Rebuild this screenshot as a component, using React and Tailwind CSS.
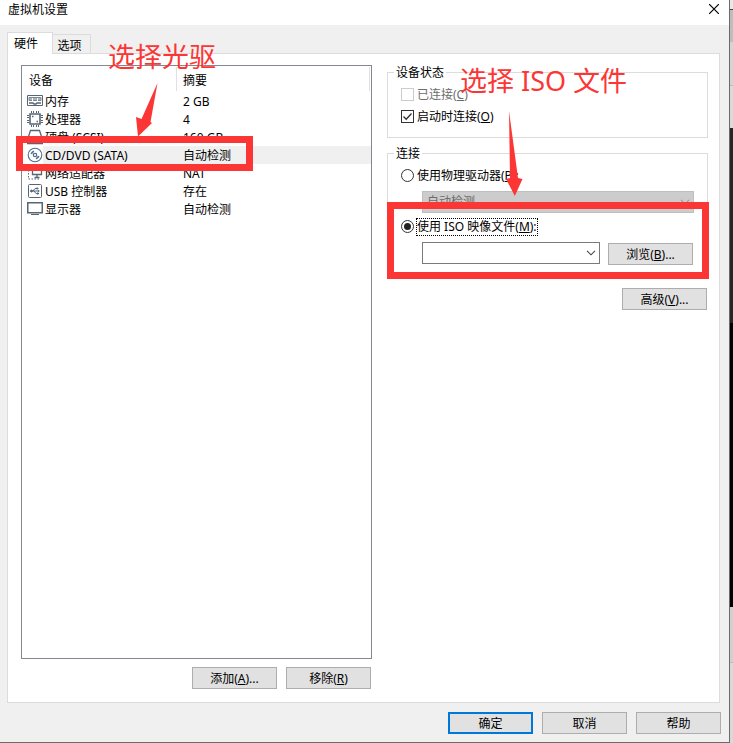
import React, { useState } from 'react';
import { clsx } from 'clsx';

const iconProps = {
  width: 16,
  height: 16,
  viewBox: '0 0 16 16',
  fill: 'none',
  stroke: '#566675',
  className: 'shrink-0',
  'aria-hidden': true,
};

const MemoryIcon = () => (
  <svg {...iconProps}>
    <path d="M.5 2.5h15v10H.5z" />
    <path d="M2 4.500h12v3H2z" fill="#a9b2ba" stroke="#7c8995" />
    <path d="M5.500 5v3M10.500 5v3" stroke="#fff" />
    <path d="M2 10h4l1 1h2l1-1h4" strokeWidth="1.500" />
  </svg>
);

const CpuIcon = () => (
  <svg {...iconProps}>
    <path d="M3 3h10v10H3z" strokeWidth="1.6" />
    <path d="M4.5 0v2M6.5 0v2M9.5 0v2M11.5 0v2M4.5 14v2M6.5 14v2M9.5 14v2M11.5 14v2M0 4.5h2M0 6.5h2M0 9.5h2M0 11.5h2M14 4.5h2M14 6.5h2M14 9.5h2M14 11.5h2" />
    <path d="M5 5.500h1.500M9.500 10.500H11" strokeWidth="1.4" />
  </svg>
);

const DiskIcon = () => (
  <svg {...iconProps}>
    <path d="M3.5 1.5h9l3 9v4H.5v-4zM.5 10.5h15M12 12.5h2" strokeWidth="1.3" />
  </svg>
);

const DiscIcon = () => (
  <svg {...iconProps} stroke="#4f6f8c">
    <circle cx="8" cy="8" r="6.8" strokeWidth="1.1" />
    <circle cx="8" cy="8" r="1.700" strokeWidth="1.2" />
    <path d="M4.300 7A4 4 0 0 1 7 4.300M11.700 9A4 4 0 0 1 9 11.700" strokeWidth="1.7" />
  </svg>
);

const NetworkIcon = () => (
  <svg {...iconProps}>
    <path d="M5.5 3.5h9v6h-9zM10 10v2M7.5 12.5h5" strokeWidth="1.3" />
    <path d="M1.5 5v9h11" strokeDasharray="1.5 1.5" />
  </svg>
);

const UsbIcon = () => (
  <svg {...iconProps}>
    <rect x="1.500" y="1.500" width="13" height="13" rx="1" />
    <path d="M4 8h8M6 8l2-2.500h2M7 8l2 2.500h1.500" />
    <circle cx="4.500" cy="8" r="1" fill="#566675" />
    <path d="M9.500 5h1.500v1H9.500zM10 10h1.500v1H10z" />
    <path d="m11 6.800 1.800 1.200-1.800 1.200z" fill="#566675" stroke="none" />
  </svg>
);

const DisplayIcon = () => (
  <svg {...iconProps}>
    <path d="M.75 1.750h14.500v10H.75z" strokeWidth="1.500" />
    <path d="M4 13.500h8" />
  </svg>
);

const devices = [
  { name: '内存', summary: '2 GB', Icon: MemoryIcon },
  { name: '处理器', summary: '4', Icon: CpuIcon },
  { name: '硬盘 (SCSI)', summary: '160 GB', Icon: DiskIcon },
  { name: 'CD/DVD (SATA)', summary: '自动检测', Icon: DiscIcon, selected: true },
  { name: '网络适配器', summary: 'NAT', Icon: NetworkIcon },
  { name: 'USB 控制器', summary: '存在', Icon: UsbIcon },
  { name: '显示器', summary: '自动检测', Icon: DisplayIcon },
];

function Button({ children, primary }) {
  return (
    <button
      type="button"
      className={clsx(
        'flex h-[22px] w-[85px] shrink-0 items-center justify-center bg-[#e1e1e1] pt-0.5',
        primary ? 'border-2 border-[#0078d7]' : 'border border-[#adadad]'
      )}
    >
      {children}
    </button>
  );
}

function Chevron({ className }) {
  return (
    <svg
      width="10"
      height="6"
      viewBox="0 0 10 6"
      fill="none"
      className={clsx('pointer-events-none absolute top-2 right-1', className)}
      aria-hidden="true"
    >
      <path d="m1 .8 4 4 4-4" stroke="currentColor" strokeWidth="1.1" />
    </svg>
  );
}

function Checkbox({ children, ...props }) {
  return (
    <label className={clsx('flex h-[18px] items-center gap-[3px]', props.disabled && 'text-[#6d6d6d]')}>
      <span className="relative mb-px size-[13px]">
        <input
          type="checkbox"
          className="peer block size-[13px] appearance-none border border-[#333] bg-white disabled:border-[#ccc]"
          {...props}
        />
        <svg
          viewBox="0 0 13 13"
          fill="none"
          className="pointer-events-none absolute inset-0 hidden peer-checked:block"
          aria-hidden="true"
        >
          <path d="m2.5 6.5 2.7 2.8 5.3-5.8" stroke="#333" strokeWidth="1.3" />
        </svg>
      </span>
      <span>{children}</span>
    </label>
  );
}

function Radio({ children, focused, ...props }) {
  return (
    <label className="flex h-[18px] items-center gap-0.5">
      <span className="relative mb-px size-[13px]">
        <input
          type="radio"
          name="connection"
          className="peer block size-[13px] appearance-none rounded-full border border-[#333] bg-white"
          {...props}
        />
        <span className="pointer-events-none absolute inset-[3px] hidden rounded-full bg-[#222] peer-checked:block" />
      </span>
      <span className={clsx('border border-dotted leading-4', focused ? 'border-black' : 'border-transparent')}>
        {children}
      </span>
    </label>
  );
}

function DeviceTable() {
  return (
    <div className="flex-1 border border-[#828790]">
      <table className="w-full table-fixed border-collapse text-left leading-4">
        <thead>
          <tr className="h-[26px]">
            <th className="w-[154px] pt-1 pl-[7px] font-normal">设备</th>
            <th className="relative pt-1 pl-[7px] font-normal">
              摘要
              <span className="absolute top-px bottom-px left-0 w-px bg-[#e0e0e0]" />
              <span className="absolute top-px right-px bottom-px w-px bg-[#e0e0e0]" />
            </th>
          </tr>
        </thead>
        <tbody>
          {devices.map(({ name, summary, Icon, selected }) => (
            <tr key={name} className="h-[18px]">
              <td className="relative p-0">
                <div className="flex h-[18px] items-center pl-[5px]">
                  <Icon />
                  <span className={clsx('flex-1 pt-0.5 pl-0.5 whitespace-nowrap', selected && 'bg-[#f0f0f0]')}>
                    {name}
                  </span>
                </div>
                {selected && (
                  <div className="pointer-events-none absolute -top-2.5 -left-1.5 z-10 h-[35px] w-[237px] border-[7px] border-[#fc3635]" />
                )}
              </td>
              <td className={clsx('p-0 pt-0.5 pl-[7px]', selected && 'bg-[#f0f0f0]')}>{summary}</td>
            </tr>
          ))}
        </tbody>
      </table>
    </div>
  );
}

function DeviceStatus() {
  const [autoConnect, setAutoConnect] = useState(true);

  return (
    <fieldset className="border border-[#dcdcdc] pb-[11px] pl-[13px]">
      <legend className="-ml-[7px] px-0.5 pt-0.5 leading-3">设备状态</legend>
      <div className="flex flex-col gap-1 pt-[7px]">
        <Checkbox disabled>
          已连接(<u>C</u>)
        </Checkbox>
        <Checkbox checked={autoConnect} onChange={(e) => setAutoConnect(e.target.checked)}>
          启动时连接(<u>O</u>)
        </Checkbox>
      </div>
    </fieldset>
  );
}

function Connection() {
  const [source, setSource] = useState('iso');

  return (
    <div className="relative mt-2">
      <fieldset className="border border-[#dcdcdc] pr-[13px] pb-[11px] pl-[13px]">
        <legend className="-ml-[7px] px-0.5 pt-0.5 leading-3">连接</legend>
        <div className="pt-[7px]">
          <Radio checked={source === 'drive'} onChange={() => setSource('drive')}>
            使用物理驱动器(<u>P</u>):
          </Radio>
          <div className="relative mt-1.5 ml-[21px]">
            <select
              disabled
              aria-label="物理驱动器"
              className="block h-[22px] w-full appearance-none border border-[#bfbfbf] bg-[#ccc] pl-1 text-[#6d6d6d] opacity-100"
            >
              <option>自动检测</option>
            </select>
            <Chevron className="text-[#9a9a9a]" />
          </div>
        </div>
        <div className="mt-[5px]">
          <Radio focused checked={source === 'iso'} onChange={() => setSource('iso')}>
            使用 ISO 映像文件(<u>M</u>):
          </Radio>
          <div className="mt-1.5 ml-[21px] flex gap-2 pr-px">
            <div className="relative flex-1">
              <select
                aria-label="ISO 映像文件"
                className="block h-[22px] w-full appearance-none border border-[#7a7a7a] bg-white pl-1"
              >
                <option></option>
              </select>
              <Chevron className="text-[#444]" />
            </div>
            <div className="pt-px">
              <Button>
                浏览(<u>B</u>)...
              </Button>
            </div>
          </div>
        </div>
      </fieldset>
      <div className="pointer-events-none absolute top-14 -right-px left-0 h-[77px] border-[7px] border-[#fc3635]" />
    </div>
  );
}

function Note({ className, children }) {
  return (
    <p className={clsx('pointer-events-none absolute z-20 text-[27px] leading-8 whitespace-nowrap text-[#fc3635]', className)}>
      {children}
    </p>
  );
}

export default function App() {
  return (
    <div className="flex min-h-screen bg-[#d9d9d9] font-['Noto_Sans','Noto_Sans_CJK_SC',sans-serif] text-[12px] leading-[18px] text-black">
      <main className="flex min-w-0 flex-1 flex-col border-r border-b border-[#6b6b6b] bg-[#f0f0f0]">
        <header className="flex h-[25px] items-start justify-between bg-white pr-2 pl-2">
          <h1 className="pt-px">虚拟机设置</h1>
          <button type="button" aria-label="关闭" className="p-0.5 pt-1">
            <svg width="10" height="10" viewBox="0 0 10 10" aria-hidden="true">
              <path d="m0 0 10 10M10 0 0 10" stroke="#000" strokeWidth="1.2" />
            </svg>
          </button>
        </header>

        <div className="flex flex-1 flex-col pt-[7px] pr-[9px] pl-[7px]">
          <div role="tablist" className="flex items-end">
            <button
              type="button"
              role="tab"
              aria-selected="true"
              className="relative z-10 -mb-px h-[22px] w-[46px] border border-b-0 border-[#dcdcdc] bg-white pr-2"
            >
              硬件
            </button>
            <button
              type="button"
              role="tab"
              aria-selected="false"
              className="h-[19px] w-[38px] border border-b-0 border-l-0 border-[#dcdcdc] pt-0.5 pr-1"
            >
              选项
            </button>
          </div>

          <section className="flex flex-1 gap-[15px] border border-[#dcdcdc] bg-white pt-[11px] pr-[11px] pb-[13px] pl-[13px]">
            <div className="relative flex min-w-0 flex-[351] flex-col">
              <DeviceTable />
              <div className="mt-2 flex justify-end gap-[9px] pr-px">
                <Button>
                  添加(<u>A</u>)...
                </Button>
                <Button>
                  移除(<u>R</u>)
                </Button>
              </div>
              <Note className="-top-6 left-[87px]">选择光驱</Note>
              <svg
                width="22"
                height="54"
                viewBox="0 0 22 54"
                className="pointer-events-none absolute top-[18px] left-[115px] z-20"
                aria-hidden="true"
              >
                <path d="M21.500 0 14.500 39 16 40 2 53.500 0 34 5.500 36z" fill="#fc3635" />
              </svg>
            </div>

            <div className="relative min-w-0 flex-[321]">
              <DeviceStatus />
              <Connection />
              <div className="mt-[11px] flex justify-end pr-px">
                <Button>
                  高级(<u>V</u>)...
                </Button>
              </div>
              <Note className="top-0 left-[73px]">选择 ISO 文件</Note>
              <svg
                width="18"
                height="86"
                viewBox="0 0 18 86"
                className="pointer-events-none absolute top-[46px] left-[118px] z-20"
                aria-hidden="true"
              >
                <path d="M4 0 13 67 17.500 68 9.800 85 1 68 5 67z" fill="#fc3635" />
              </svg>
            </div>
          </section>
        </div>

        <footer className="flex justify-end gap-[9px] pt-[9px] pr-2 pb-2">
          <Button primary>确定</Button>
          <Button>取消</Button>
          <Button>帮助</Button>
        </footer>
      </main>

      {/* window behind the dialog */}
      <div className="flex w-[3px] flex-col" aria-hidden="true">
        <div className="h-[9px] bg-[#e8e8e8]" />
        <div className="h-px bg-[#444]" />
        <div className="h-8 bg-[#bdbdbd]" />
        <div className="h-[43px] bg-[#d4d4d4]" />
        <div className="h-px bg-[#bbb]" />
        <div className="h-[42px] bg-[#dadada]" />
        <div className="h-[195px] bg-[#262626]" />
        <div className="h-[284px] bg-black" />
        <div className="h-[55px] bg-[#d0d0d0]" />
        <div className="h-px bg-[#bbb]" />
      </div>
    </div>
  );
}
